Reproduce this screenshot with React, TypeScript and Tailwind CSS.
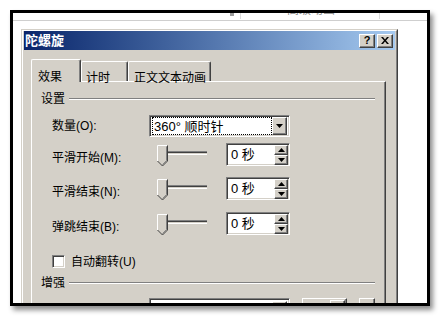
import React from "react";

const raised =
  "bg-[#d4d0c8] border border-t-white border-l-white border-r-[#404040] border-b-[#404040] shadow-[inset_-1px_-1px_0_#808080]";
const sunken =
  "border border-t-[#808080] border-l-[#808080] border-r-white border-b-white shadow-[inset_1px_1px_0_#404040,inset_-1px_-1px_0_#d4d0c8]";

function DownArrow() {
  return (
    <svg width="7" height="4" viewBox="0 0 7 4">
      <polygon points="0,0 7,0 3.5,4" fill="#000" />
    </svg>
  );
}
function UpArrow() {
  return (
    <svg width="7" height="4" viewBox="0 0 7 4">
      <polygon points="0,4 7,4 3.5,0" fill="#000" />
    </svg>
  );
}

function Slider() {
  return (
    <svg width="52" height="22" viewBox="0 0 52 22" className="shrink-0">
      <rect x="4" y="6" width="46" height="1" fill="#808080" />
      <rect x="4" y="7" width="46" height="1" fill="#404040" />
      <rect x="4" y="8" width="46" height="1" fill="#d4d0c8" />
      <rect x="4" y="9" width="46" height="1" fill="#ffffff" />
      <polygon points="0.5,0.5 10.5,0.5 10.5,16 5.5,21 0.5,16" fill="#d4d0c8" />
      <polyline points="0.5,16 0.5,0.5 10,0.5" fill="none" stroke="#ffffff" />
      <polyline points="10.5,0.5 10.5,16 5.5,21 0.5,16" fill="none" stroke="#404040" />
      <polyline points="9.5,1.5 9.5,15.6 5.5,19.6" fill="none" stroke="#808080" />
    </svg>
  );
}

function Spinner() {
  return (
    <div className={`w-[64px] h-[23px] bg-white flex items-center ${sunken}`}>
      <span className="flex-1 pl-[4px] text-[13px] leading-[15px] text-black">0 秒</span>
      <div className="flex flex-col gap-0 mr-[1px]">
        <div className={`w-[14px] h-[10px] flex items-center justify-center ${raised}`}>
          <UpArrow />
        </div>
        <div className={`w-[14px] h-[10px] flex items-center justify-center ${raised}`}>
          <DownArrow />
        </div>
      </div>
    </div>
  );
}

function GroupHeader({ label }: { label: string }) {
  return (
    <div className="flex items-center h-[14px] pl-[9px] pr-[10px]">
      <span className="text-[12px] leading-[14px] text-black">{label}</span>
      <div className="flex-1 ml-[4px] h-[2px] border-t border-t-[#808080] border-b border-b-white" />
    </div>
  );
}

function SliderRow({ label, mt }: { label: string; mt: string }) {
  return (
    <div className={`flex items-center h-[23px] pl-[20px] ${mt}`}>
      <span className="w-[105px] mt-[6px] text-[12px] leading-[14px] text-black">{label}</span>
      <div className="mt-[2px]">
        <Slider />
      </div>
      <div className="ml-[17px]">
        <Spinner />
      </div>
    </div>
  );
}

export default function App() {
  return (
    <div className="w-[441px] h-[317px] bg-white overflow-hidden pt-[10px] pl-[10px] font-['Liberation_Sans','Noto_Sans_CJK_SC',sans-serif]">
      <div className="w-[420px] h-[296px] border-[3px] border-black shadow-[3px_4px_5px_rgba(0,0,0,0.45)] bg-white overflow-hidden">
        {/* top strip of underlying window */}
        <div className="h-[7px] flex items-start overflow-hidden border-b border-b-[#cfcfcf] box-content">
          <div className="w-[217px] shrink-0" />
          <div className="w-[4px] h-[3px] bg-[#9a9a9a] mt-[0px]" />
          <div className="w-[6px] shrink-0" />
          <div className="w-[1px] h-[6px] bg-[#dcdcdc]" />
          <div className="w-[46px] shrink-0" />
          <span className="text-[12px] leading-[12px] text-[#8a8a8a] -mt-[9px] whitespace-nowrap">高级动画</span>
          <div className="w-[44px] shrink-0" />
          <div className="w-[1px] h-[6px] bg-[#dcdcdc]" />
        </div>

        <div className="pl-[8px] pt-[8px]">
          {/* dialog */}
          <div className="w-[377px] h-[300px] border border-t-[#d4d0c8] border-l-[#d4d0c8] border-r-[#404040] border-b-[#404040]">
            <div className="h-full border border-t-white border-l-white border-r-[#808080] border-b-[#808080] bg-[#d4d0c8] px-[1px]">
              {/* title bar */}
              <div className="h-[19px] bg-gradient-to-r from-[#0a246a] to-[#a6caf0] flex items-center pl-[1px] pr-[2px]">
                <span className="text-white font-bold text-[13px] leading-[15px] flex-1">陀螺旋</span>
                <div className={`w-[16px] h-[14px] flex items-center justify-center ${raised}`}>
                  <span className="text-[11px] leading-[11px] font-bold text-black font-['Liberation_Sans',sans-serif]">?</span>
                </div>
                <div className={`w-[16px] h-[14px] ml-[2px] flex items-center justify-center ${raised}`}>
                  <svg width="8" height="7" viewBox="0 0 8 7">
                    <path d="M0,0 L2,0 L4,2.5 L6,0 L8,0 L5,3.5 L8,7 L6,7 L4,4.5 L2,7 L0,7 L3,3.5 Z" fill="#000" />
                  </svg>
                </div>
              </div>

              {/* tabs */}
              <div className="flex items-end h-[22px] mt-[9px] pl-[7px]">
                <div className="relative z-10 w-[50px] h-[23px] -mb-[1px] bg-[#d4d0c8] border-t border-l border-t-white border-l-white border-r border-r-[#404040] shadow-[inset_-1px_0_0_#808080] rounded-t-[2px] pl-[6px] pt-[4px]">
                  <span className="text-[12px] leading-[14px] text-black">效果</span>
                </div>
                <div className="w-[47px] h-[20px] bg-[#d4d0c8] border-t border-l border-t-white border-l-white border-r border-r-[#404040] shadow-[inset_-1px_0_0_#808080] rounded-t-[2px] pl-[4px] pt-[3px]">
                  <span className="text-[12px] leading-[14px] text-black">计时</span>
                </div>
                <div className="w-[83px] h-[20px] bg-[#d4d0c8] border-t border-l border-t-white border-l-white border-r border-r-[#404040] shadow-[inset_-1px_0_0_#808080] rounded-t-[2px] pl-[5px] pt-[3px]">
                  <span className="text-[12px] leading-[14px] text-black">正文文本动画</span>
                </div>
              </div>

              {/* panel */}
              <div className="ml-[7px] w-[355px] h-[240px] border-t border-l border-t-white border-l-white border-r border-r-[#404040] shadow-[inset_-1px_0_0_#808080] pt-[10px]">
                <GroupHeader label="设置" />

                <div className="flex items-center h-[22px] pl-[20px] mt-[9px]">
                  <span className="w-[97px] text-[12px] leading-[14px] text-black">数量(O):</span>
                  <div className={`w-[141px] h-[22px] bg-white flex items-center p-[2px] ${sunken}`}>
                    <div className="flex-1 h-[18px] border border-dotted border-black flex items-center pl-[1px]">
                      <span className="text-[13px] leading-[15px] text-black whitespace-nowrap">360° 顺时针</span>
                    </div>
                    <div className={`w-[15px] h-[18px] flex items-center justify-center ${raised}`}>
                      <DownArrow />
                    </div>
                  </div>
                </div>

                <SliderRow label="平滑开始(M):" mt="mt-[6px]" />
                <SliderRow label="平滑结束(N):" mt="mt-[11px]" />
                <SliderRow label="弹跳结束(B):" mt="mt-[12px]" />

                <div className="flex items-center h-[13px] pl-[20px] mt-[20px]">
                  <div className={`w-[13px] h-[13px] bg-white ${sunken}`} />
                  <span className="ml-[6px] text-[12px] leading-[14px] text-black">自动翻转(U)</span>
                </div>

                <div className="mt-[8px]">
                  <GroupHeader label="增强" />
                </div>

                <div className="flex items-start h-[20px] mt-[8px] pl-[117px]">
                  <div className={`w-[141px] h-[20px] bg-white flex items-start p-[2px] ${sunken}`}>
                    <div className="w-[6px] h-[6px] bg-black ml-[5px] mt-[2px]" />
                    <div className="w-[2px] h-[2px] bg-[#2050d0] ml-[22px] mt-[2px]" />
                    <div className="flex-1" />
                    <div className={`w-[15px] h-[16px] ${raised}`} />
                  </div>
                  <div className={`w-[45px] h-[20px] ml-[12px] flex items-start justify-end ${raised}`}>
                    <div className={`w-[15px] h-[16px] mr-[1px] mt-[1px] ${raised}`} />
                  </div>
                  <div className={`w-[16px] h-[20px] ml-[12px] ${raised}`} />
                </div>
              </div>
            </div>
          </div>
        </div>
      </div>
    </div>
  );
}
